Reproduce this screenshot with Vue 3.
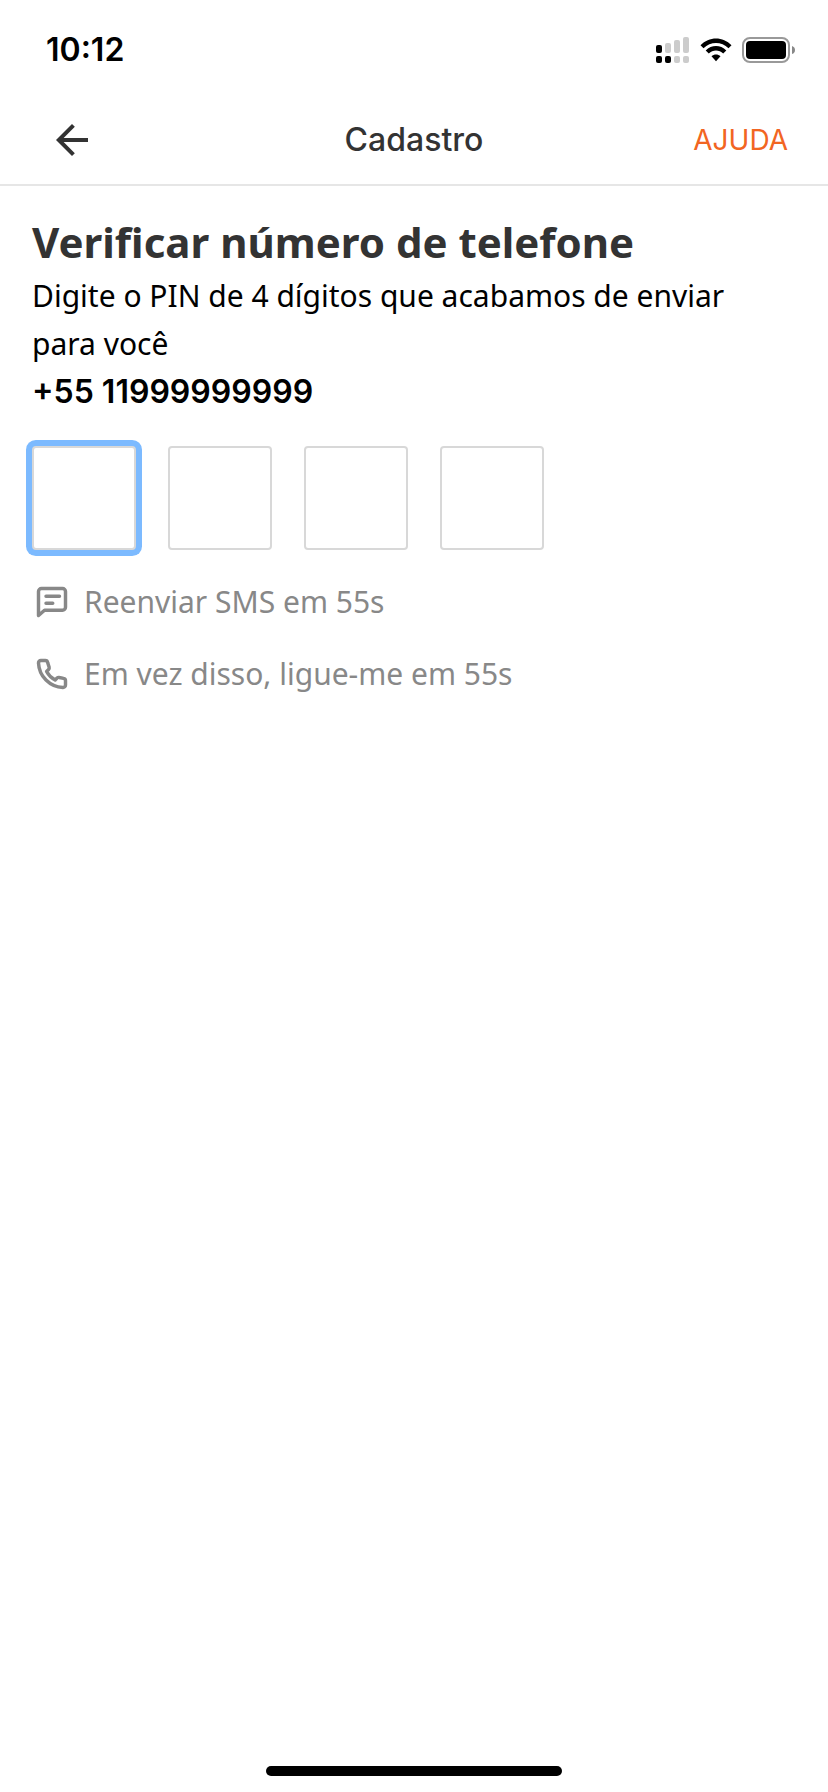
<script setup>
import { ref } from 'vue'

const digits = ref(['', '', '', ''])
const seconds = 55
</script>

<template>
  <div class="screen">
    <div class="status">
      <time class="clock">10:12</time>
      <div class="indicators">
        <svg class="signal" viewBox="0 0 34 28" aria-hidden="true">
          <g fill="#000">
            <rect x="0" y="9" width="6" height="8" rx="2" />
            <rect x="0" y="20" width="6" height="7" rx="2" />
            <rect x="9" y="20" width="6" height="7" rx="2" />
          </g>
          <g fill="#cccccc">
            <rect x="9" y="7" width="6" height="10" rx="2" />
            <rect x="18" y="4" width="6" height="13" rx="2" />
            <rect x="27" y="1" width="6" height="16" rx="2" />
            <rect x="18" y="20" width="6" height="7" rx="2" />
            <rect x="27" y="20" width="6" height="7" rx="2" />
          </g>
        </svg>
        <svg class="wifi" viewBox="0 0 32 24" aria-hidden="true">
          <path d="M0.5 7.2C9-1.900 23-1.900 31.500 7.200L28.500 10.200C21.500 3.200 10.500 3.200 3.500 10.200Z" />
          <path d="M5.700 12.400C11.500 6.600 20.500 6.600 26.300 12.400L23.200 15.500C19.200 11.600 12.800 11.600 8.800 15.500Z" />
          <path d="M11.500 18.200C14 16 18 16 20.500 18.200L16 23.300Z" />
        </svg>
        <svg class="battery" viewBox="0 0 54 26" aria-hidden="true">
          <rect x="1" y="1" width="46" height="24" rx="7" fill="none" stroke="#999" stroke-width="2" />
          <rect x="4" y="4" width="40" height="18" rx="4" fill="#000" />
          <path d="M50 9Q53 10 53 13Q53 16 50 17Z" fill="#888" />
        </svg>
      </div>
    </div>

    <header class="bar">
      <button class="back" type="button" aria-label="Voltar">
        <svg viewBox="0 0 24 24" aria-hidden="true">
          <path d="M20 11H7.830l5.590-5.590L12 4l-8 8 8 8 1.410-1.410L7.830 13H20v-2z" fill="#333" />
        </svg>
      </button>
      <h1 class="title">Cadastro</h1>
      <a class="help" href="#ajuda">AJUDA</a>
    </header>

    <main class="content">
      <h2 class="heading">Verificar número de telefone</h2>
      <p class="text">Digite o PIN de 4 dígitos que acabamos de enviar para você</p>
      <p class="phone">+55 11999999999</p>

      <div class="pin">
        <input
          v-for="(d, i) in digits"
          :key="i"
          v-model="digits[i]"
          class="digit"
          :class="{ active: i === 0 }"
          type="text"
          inputmode="numeric"
          maxlength="1"
          :aria-label="`Dígito ${i + 1}`"
        />
      </div>

      <div class="actions">
        <button class="action" type="button">
          <svg viewBox="0 0 24 24" aria-hidden="true">
            <path d="M3 21V5a2 2 0 0 1 2-2h14a2 2 0 0 1 2 2v10.500a2 2 0 0 1-2 2H7L3 21z" />
            <path d="M8 8.200h9M8 12.800h4.500" />
          </svg>
          Reenviar SMS em {{ seconds }}s
        </button>
        <button class="action" type="button">
          <svg viewBox="0 0 24 24" aria-hidden="true">
            <path d="M7.500 3H4.600A1.600 1.600 0 0 0 3 4.700C3.400 13.500 10.500 20.600 19.300 21a1.600 1.600 0 0 0 1.700-1.600v-2.900a1.600 1.600 0 0 0-1.300-1.600l-2.800-.6a1.600 1.600 0 0 0-1.500.4l-1.300 1.300a14 14 0 0 1-5.700-5.700l1.300-1.300a1.600 1.600 0 0 0 .4-1.500l-1-3.200A1.600 1.600 0 0 0 7.500 3z" />
          </svg>
          Em vez disso, ligue-me em {{ seconds }}s
        </button>
      </div>
    </main>

    <div class="home"></div>
  </div>
</template>

<style>
body {
  margin: 0;
  background: #fff;
}
</style>

<style scoped>
.screen {
  min-height: 100vh;
  display: flex;
  flex-direction: column;
  box-sizing: border-box;
  padding-bottom: 16px;
  background: #fff;
  color: #000;
  font-family: "Noto Sans", sans-serif;
}
.status {
  height: 96px;
  box-sizing: border-box;
  padding: 4px 32px 0 46px;
  display: flex;
  align-items: center;
  justify-content: space-between;
}
.clock {
  font: 600 32px/40px Inter, sans-serif;
}
.indicators {
  display: flex;
  align-items: center;
  gap: 10px;
}
.signal {
  width: 34px;
  height: 28px;
}
.wifi {
  width: 32px;
  height: 24px;
}
.battery {
  width: 54px;
  height: 26px;
}
.bar {
  display: grid;
  grid-template-columns: 1fr auto 1fr;
  align-items: center;
  height: 88px;
  padding: 0 40px;
  border-bottom: 2px solid #e6e6e6;
}
button {
  border: 0;
  padding: 0;
  background: none;
  cursor: pointer;
}
.back {
  width: 48px;
  height: 48px;
  margin-left: 8px;
}
.back svg {
  display: block;
  width: 48px;
  height: 48px;
}
.title {
  margin: 0;
  color: #333;
  font: 500 32px/40px Inter, sans-serif;
}
.help {
  justify-self: end;
  color: #f26522;
  font: 400 28px/40px Inter, sans-serif;
  text-decoration: none;
}
.content {
  flex: 1;
  padding: 26px 64px 0 32px;
}
.heading {
  margin: 0;
  color: #333;
  font-size: 42px;
  font-weight: 700;
  line-height: 60px;
}
.text,
.phone {
  margin: 0;
  font-size: 30px;
  line-height: 48px;
}
.phone {
  font-family: Inter, sans-serif;
  font-size: 32px;
  font-weight: 600;
}
.pin {
  display: flex;
  gap: 32px;
  margin: 30px 0 28px;
}
.digit {
  width: 104px;
  height: 104px;
  box-sizing: border-box;
  padding: 0;
  border: 2px solid #d8d8d8;
  border-radius: 4px;
  outline: none;
  background: #fff;
  text-align: center;
  font: 400 42px/60px "Noto Sans", sans-serif;
}
.active {
  box-shadow: 0 0 0 6px #7cbaff;
}
.actions {
  display: flex;
  flex-direction: column;
  align-items: flex-start;
  gap: 24px;
}
.action {
  display: flex;
  align-items: center;
  gap: 14px;
  padding-left: 2px;
  color: #888;
  font: 400 30px/48px "Noto Sans", sans-serif;
  text-align: left;
}
.action svg {
  width: 36px;
  height: 36px;
  fill: none;
  stroke: #888;
  stroke-width: 2.3;
  stroke-linecap: round;
  stroke-linejoin: round;
}
.home {
  align-self: center;
  width: 296px;
  max-width: 60%;
  height: 10px;
  border-radius: 5px;
  background: #000;
}
</style>
